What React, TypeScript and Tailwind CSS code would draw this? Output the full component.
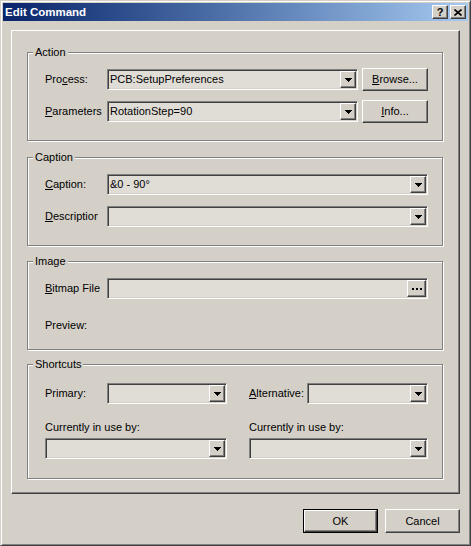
import React from "react";

// classic 3D bevels
const raised =
  "border border-t-white border-l-white border-r-[#404040] border-b-[#404040] shadow-[inset_-1px_-1px_0_#808080]";
const sunken =
  "border border-t-[#808080] border-l-[#808080] border-r-white border-b-white shadow-[inset_1px_1px_0_#404040,inset_-1px_-1px_0_#d4d0c8]";

function Arrow() {
  return (
    <svg width="7" height="4" viewBox="0 0 7 4" shapeRendering="crispEdges">
      <rect x="0" y="0" width="7" height="1" fill="#000" />
      <rect x="1" y="1" width="5" height="1" fill="#000" />
      <rect x="2" y="2" width="3" height="1" fill="#000" />
      <rect x="3" y="3" width="1" height="1" fill="#000" />
    </svg>
  );
}

function Dots() {
  return (
    <div className="flex gap-[2px]">
      <span className="block h-[2px] w-[2px] bg-black" />
      <span className="block h-[2px] w-[2px] bg-black" />
      <span className="block h-[2px] w-[2px] bg-black" />
    </div>
  );
}

function Combo({
  value = "",
  width,
  dots = false,
  className = "",
}: {
  value?: string;
  width: string;
  dots?: boolean;
  className?: string;
}) {
  return (
    <div className={`flex h-[21px] shrink-0 bg-[#e0ddd7] p-[1px] ${sunken} ${width} ${className}`}>
      <div className="flex min-w-0 flex-1 items-center overflow-hidden whitespace-nowrap pl-[1px]">
        {value}
      </div>
      <div
        className={`flex ${dots ? "w-[19px]" : "w-[16px]"} items-center justify-center bg-[#d4d0c8] ${raised}`}
      >
        {dots ? <Dots /> : <Arrow />}
      </div>
    </div>
  );
}

function Btn({ children, className = "" }: { children: React.ReactNode; className?: string }) {
  return (
    <div className={`flex items-center justify-center bg-[#d4d0c8] ${raised} ${className}`}>
      {children}
    </div>
  );
}

function Group({
  title,
  className = "",
  children,
}: {
  title: string;
  className?: string;
  children: React.ReactNode;
}) {
  return (
    <div
      className={`relative w-[416px] border border-[#808080] pl-[17px] shadow-[1px_1px_0_#fff,inset_1px_1px_0_#fff] ${className}`}
    >
      <span className="absolute -top-[7px] left-[5px] bg-[#d4d0c8] px-[2px] leading-[13px]">
        {title}
      </span>
      {children}
    </div>
  );
}

export default function App() {
  return (
    <div className="h-[546px] w-[471px] bg-[#d4d0c8] font-['Liberation_Sans',Arial,sans-serif] text-[11px] leading-[13px] text-black">
      <div className="flex h-full flex-col border border-t-[#d4d0c8] border-l-[#d4d0c8] border-r-[#404040] border-b-[#404040] p-[2px] shadow-[inset_1px_1px_0_#fff,inset_-1px_-1px_0_#808080]">
        {/* title bar */}
        <div className="flex h-[18px] shrink-0 items-center bg-linear-to-r from-[#0a246a] to-[#a6caf0] pl-[2px] pr-[2px]">
          <span className="flex-1 text-[11.5px] font-bold text-white">Edit Command</span>
          <Btn className="h-[14px] w-[16px] text-[11px] font-bold leading-none">?</Btn>
          <Btn className="ml-[2px] h-[14px] w-[16px]">
            <svg width="8" height="7" viewBox="0 0 8 7">
              <path d="M0.5 0.5L7.5 6.5M7.5 0.5L0.5 6.5" stroke="#000" strokeWidth="1.6" />
            </svg>
          </Btn>
        </div>

        {/* main panel */}
        <div className="mx-[8px] mt-[9px] flex flex-col border border-t-white border-l-white border-r-[#404040] border-b-[#404040] pb-[14px] pl-[15px] pt-[21px] shadow-[inset_-1px_-1px_0_#808080]">
          <Group title="Action" className="flex flex-col gap-[9px] pb-[17px] pt-[15px]">
            <div className="flex h-[23px] items-center">
              <span className="w-[62px]">
                Pro<span className="underline">c</span>ess:
              </span>
              <Combo value="PCB:SetupPreferences" width="w-[251px]" />
              <Btn className="ml-[4px] h-[23px] w-[66px]">
                <span>
                  <span className="underline">B</span>rowse...
                </span>
              </Btn>
            </div>
            <div className="flex h-[23px] items-center">
              <span className="w-[62px]">
                <span className="underline">P</span>arameters
              </span>
              <Combo value="RotationStep=90" width="w-[251px]" />
              <Btn className="ml-[4px] h-[23px] w-[66px]">
                <span>
                  <span className="underline">I</span>nfo...
                </span>
              </Btn>
            </div>
          </Group>

          <Group title="Caption" className="mt-[16px] flex flex-col gap-[11px] pb-[18px] pt-[16px]">
            <div className="flex h-[21px] items-center">
              <span className="w-[62px]">
                <span className="underline">C</span>aption:
              </span>
              <Combo value="&0 - 90°" width="w-[321px]" />
            </div>
            <div className="flex h-[21px] items-center">
              <span className="w-[62px]">
                <span className="block w-[53px] overflow-hidden whitespace-nowrap">
                  <span className="underline">D</span>escription:
                </span>
              </span>
              <Combo width="w-[321px]" />
            </div>
          </Group>

          <Group title="Image" className="mt-[15px] flex flex-col pb-[17px] pt-[16px]">
            <div className="flex h-[21px] items-center">
              <span className="w-[62px]">
                <span className="underline">B</span>itmap File
              </span>
              <Combo width="w-[321px]" dots />
            </div>
            <div className="mt-[20px] h-[13px]">Preview:</div>
          </Group>

          <Group title="Shortcuts" className="mt-[14px] flex pb-[19px] pt-[18px]">
            <div className="flex w-[182px] flex-col">
              <div className="flex h-[21px] items-center">
                <span className="w-[62px]">Primary:</span>
                <Combo width="w-[120px]" />
              </div>
              <div className="mt-[17px] h-[13px]">Currently in use by:</div>
              <Combo width="w-[182px]" className="mt-[4px]" />
            </div>
            <div className="ml-[22px] flex w-[179px] flex-col">
              <div className="flex h-[21px] items-center">
                <span className="w-[58px] whitespace-nowrap">
                  <span className="underline">A</span>lternative:
                </span>
                <Combo width="w-[121px]" />
              </div>
              <div className="mt-[17px] h-[13px]">Currently in use by:</div>
              <Combo width="w-[179px]" className="mt-[4px]" />
            </div>
          </Group>
        </div>

        {/* dialog buttons */}
        <div className="mr-[8px] mt-[15px] flex justify-end gap-[7px]">
          <div className="h-[24px] w-[75px] border border-black">
            <Btn className="h-full w-full">OK</Btn>
          </div>
          <Btn className="h-[24px] w-[75px]">Cancel</Btn>
        </div>
      </div>
    </div>
  );
}
